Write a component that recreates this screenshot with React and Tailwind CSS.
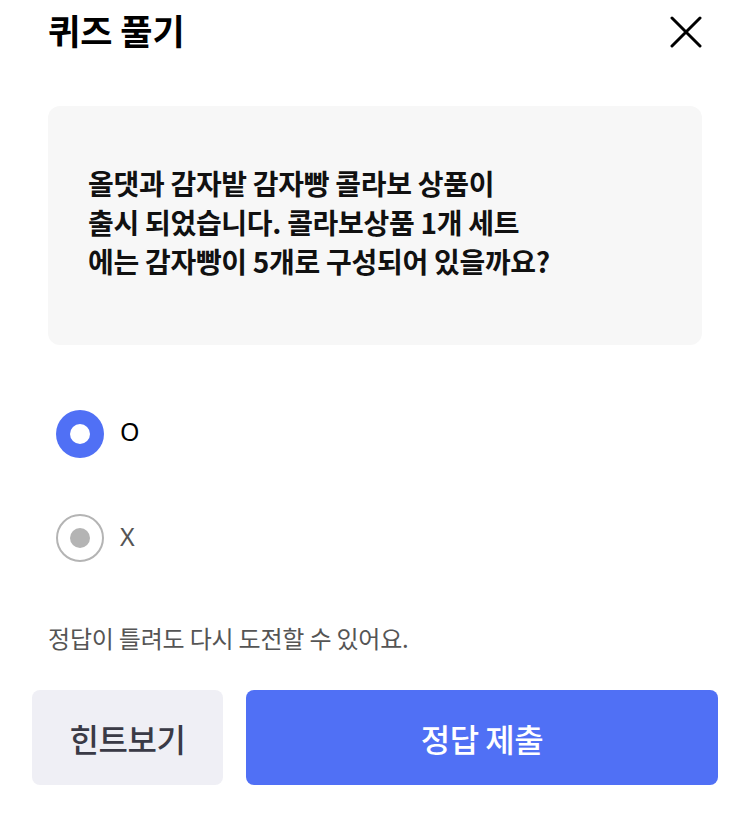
import React from "react";

const font = { fontFamily: '"Noto Sans CJK KR", "Noto Sans", sans-serif' };

export default function App() {
  return (
    <div className="w-[750px] h-[817px] bg-white relative" style={font}>
      <div className="flex items-center justify-between pl-[48px] pr-[48px] pt-[10px] h-[54px]">
        <h1 className="text-[35px] leading-[44px] font-bold text-black mb-[4px]">퀴즈 풀기</h1>
        <svg width="32" height="32" viewBox="0 0 32 32">
          <path d="M2 2 L30 30 M30 2 L2 30" stroke="#000" strokeWidth="3" strokeLinecap="round" />
        </svg>
      </div>

      <div className="mx-[48px] mt-[52px] h-[239px] rounded-[12px] bg-[#f7f7f7] flex items-center px-[40px]">
        <p className="text-[28px] leading-[39px] font-bold text-[#111] tracking-[-0.3px] mb-[6px]">
          올댓과 감자밭 감자빵 콜라보 상품이
          <br />
          출시 되었습니다. 콜라보상품 1개 세트
          <br />
          에는 감자빵이 5개로 구성되어 있을까요?
        </p>
      </div>

      <div className="flex flex-col gap-[56px] pl-[56px] mt-[65px]">
        <div className="flex items-center gap-[16px] h-[48px]">
          <div className="w-[48px] h-[48px] rounded-full bg-[#5070f5] flex items-center justify-center">
            <div className="w-[20px] h-[20px] rounded-full bg-white" />
          </div>
          <span className="text-[25px] text-black leading-none -mt-[6px]" style={{ fontFamily: '"Noto Sans", sans-serif' }}>O</span>
        </div>
        <div className="flex items-center gap-[16px] h-[48px]">
          <div className="w-[48px] h-[48px] rounded-full border-2 border-[#b4b4b4] flex items-center justify-center">
            <div className="w-[20px] h-[20px] rounded-full bg-[#b4b4b4]" />
          </div>
          <span className="text-[25px] text-[#555] leading-none -mt-[4px]" style={{ fontFamily: '"Noto Sans", sans-serif' }}>X</span>
        </div>
      </div>

      <p className="pl-[48px] mt-[60px] text-[24px] leading-[32px] text-[#555] tracking-[-0.2px]">
        정답이 틀려도 다시 도전할 수 있어요.
      </p>

      <div className="flex gap-[23px] px-[32px] mt-[36px]">
        <button className="w-[191px] h-[95px] rounded-[8px] bg-[#efeff5] text-[32px] font-medium text-[#3a3a46] tracking-[-0.5px]">
          힌트보기
        </button>
        <button className="flex-1 h-[95px] rounded-[8px] bg-[#5070f5] text-[32px] font-medium text-white tracking-[-0.5px]">
          정답 제출
        </button>
      </div>
    </div>
  );
}
